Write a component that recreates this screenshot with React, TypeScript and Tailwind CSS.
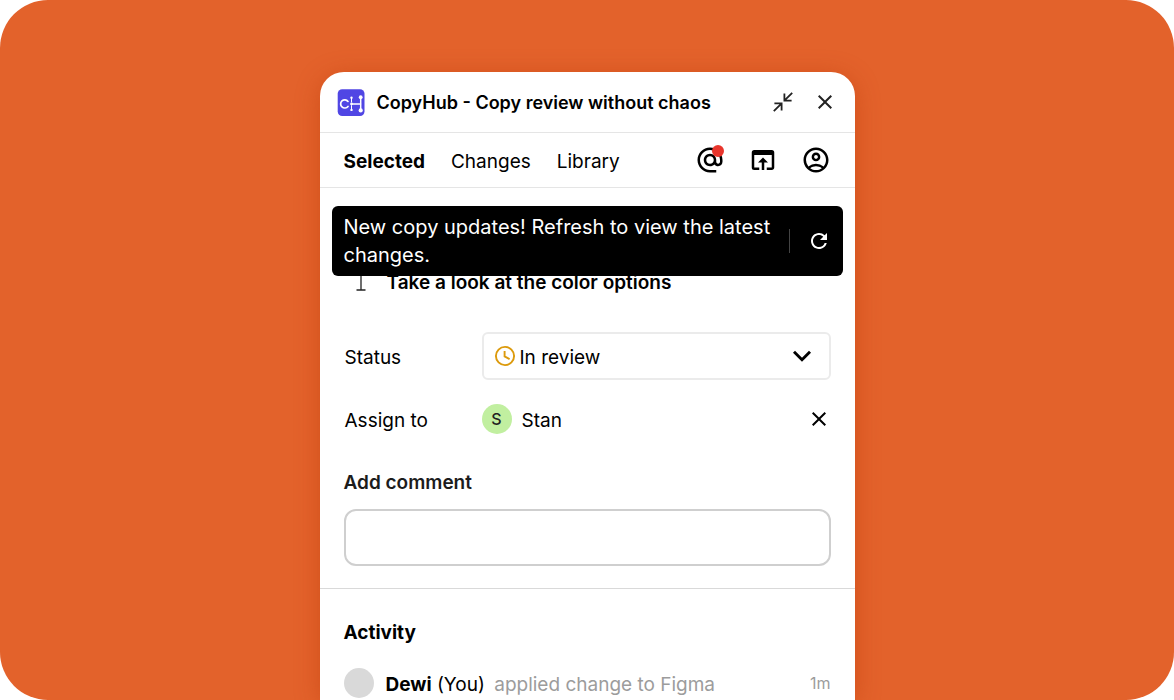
import React, { useState } from "react";
import {
  MdAlternateEmail,
  MdClose,
  MdOpenInBrowser,
  MdOutlineAccountCircle,
  MdRefresh,
} from "react-icons/md";

const tabs = ["Selected", "Changes", "Library"];

const Logo = () => (
  <svg className="size-7 shrink-0" viewBox="0 0 28 28" fill="none" aria-hidden="true">
    <rect x="0.7" y="0.2" width="26.8" height="26.8" rx="4.5" fill="#5046e4" />
    <g stroke="#fff" strokeLinecap="round">
      <path d="M11 12.4a4.1 4.1 0 1 0 0 5" strokeWidth="1.7" />
      <path d="M14.5 9v4M14.5 16.6v4" strokeWidth="1" />
      <path d="M14.5 14.9h9" strokeWidth="1.5" />
      <path d="M23.7 8.5v12.5" strokeWidth="1.5" />
    </g>
    <g fill="#fff">
      <circle cx="14.5" cy="8.8" r="1.2" />
      <circle cx="14.5" cy="14.9" r="1.3" />
      <circle cx="14.5" cy="20.9" r="1.2" />
      <circle cx="23.7" cy="8.2" r="1.9" />
      <circle cx="23.7" cy="21.4" r="2.1" />
    </g>
  </svg>
);

const CollapseIcon = () => (
  <svg className="size-5" viewBox="0 0 20 20" fill="none" stroke="currentColor" strokeWidth="1.8" aria-hidden="true">
    <path d="M19.2 0.8l-7.6 7.6M11.4 1.6v7h7.2" />
    <path d="M0.8 19.2l7.6-7.6M8.6 18.6v-7.2h-7.2" />
  </svg>
);

const ClockIcon = () => (
  <svg className="size-6 shrink-0" viewBox="0 0 24 24" fill="none" stroke="#dc9a0c" strokeWidth="1.9" aria-hidden="true">
    <circle cx="12" cy="12" r="9.1" />
    <path d="M11.6 7v5.4l5 2.8" />
  </svg>
);

const ChevronIcon = () => (
  <svg className="pointer-events-none size-5 shrink-0" viewBox="0 0 20 20" fill="none" stroke="#000" strokeWidth="2.9" aria-hidden="true">
    <path d="M2 5.8l8 8 8-8" />
  </svg>
);

const TextLayerIcon = () => (
  <svg className="h-6 w-5 shrink-0" viewBox="0 0 20 24" fill="none" stroke="#222" strokeWidth="1.3" aria-hidden="true">
    <path d="M5.5 2.5h9M10 2.5v17.5M5.5 20h9" />
  </svg>
);

const App: React.FC = () => {
  const [activeTab, setActiveTab] = useState<string>("Selected");
  const [status, setStatus] = useState<string>("In review");
  const [comment, setComment] = useState<string>("");

  return (
    <div className="h-screen overflow-hidden rounded-[48px] bg-[#e3622b] px-4 pt-18 font-['Inter',sans-serif] text-[19px] leading-7 text-black">
      <main className="mx-auto min-h-full max-w-[535px] rounded-t-3xl bg-white shadow-[0_4px_24px_rgba(180,50,0,0.4)]">
        {/* Title bar */}
        <header className="flex h-[61px] items-center border-b border-[#e5e5e5] pr-[18px] pl-[17px]">
          <div className="flex flex-1 items-center gap-3 pt-0.5">
            <Logo />
            <h1 className="text-lg leading-7 font-semibold">
              CopyHub - Copy review without chaos
            </h1>
          </div>
          <button aria-label="Collapse" className="mr-5 text-[#222]">
            <CollapseIcon />
          </button>
          <button aria-label="Close" className="text-[#222]">
            <MdClose size={24} />
          </button>
        </header>

        {/* Tabs */}
        <nav className="flex h-[55px] items-center border-b border-[#e5e5e5] px-6">
          <div className="flex flex-1 gap-[26px] pt-1">
            {tabs.map((tab) => (
              <button
                key={tab}
                onClick={() => setActiveTab(tab)}
                className={activeTab === tab ? "font-bold" : ""}
              >
                {tab}
              </button>
            ))}
          </div>
          <div className="flex items-center gap-[23px]">
            <button aria-label="Mentions" className="relative">
              <MdAlternateEmail size={30} />
              <span className="absolute top-0 right-px size-3 rounded-full bg-[#e8352c]"></span>
            </button>
            <button aria-label="Open in browser">
              <MdOpenInBrowser size={30} />
            </button>
            <button aria-label="Account">
              <MdOutlineAccountCircle size={30} />
            </button>
          </div>
        </nav>

        {/* Selected layer */}
        <section className="relative px-6 pt-20">
          <div
            role="status"
            className="absolute inset-x-3 top-[18px] flex items-center rounded-md bg-black px-3 py-[7px] text-white"
          >
            <p className="flex-1 text-xl leading-7">
              New copy updates! Refresh to view the latest changes.
            </p>
            <span className="mr-[17px] h-6 w-px bg-[#444]"></span>
            <button aria-label="Refresh">
              <MdRefresh size={24} />
            </button>
          </div>

          <div className="flex h-7 items-center pl-[7px]">
            <TextLayerIcon />
            <h2 className="ml-4 pt-0.5 font-semibold">Take a look at the color options</h2>
          </div>

          <div className="mt-9 flex items-center">
            <label htmlFor="status" className="w-[138px] pt-1 pl-px">
              Status
            </label>
            <div className="flex h-12 flex-1 items-center rounded-md border-2 border-[#ebebeb] pr-[17px] pl-[9px]">
              <ClockIcon />
              <select
                id="status"
                value={status}
                onChange={(e) => setStatus(e.target.value)}
                className="ml-[3px] flex-1 appearance-none bg-transparent pt-1 outline-none"
              >
                <option>In review</option>
                <option>Approved</option>
                <option>Draft</option>
              </select>
              <ChevronIcon />
            </div>
          </div>

          <div className="mt-6 flex h-[30px] items-center">
            <span className="w-[138px] pt-1 pl-px">Assign to</span>
            <span className="flex size-[30px] items-center justify-center rounded-full bg-[#c1efa0] text-base font-medium text-[#222]">
              S
            </span>
            <span className="ml-[10px] flex-1 pt-1">Stan</span>
            <button aria-label="Remove assignee">
              <MdClose size={24} />
            </button>
          </div>

          <label htmlFor="comment" className="mt-[35px] block font-semibold text-[#1c1c1c]">
            Add comment
          </label>
          <input
            id="comment"
            type="text"
            value={comment}
            onChange={(e) => setComment(e.target.value)}
            className="mt-3 h-[57px] w-full rounded-xl border-2 border-[#cfcfcf] px-4 outline-none"
          />
        </section>

        {/* Activity */}
        <section className="mt-[22px] border-t border-[#d9d9d9] px-6 pt-[30px]">
          <h2 className="font-bold">Activity</h2>
          <div className="mt-5 flex items-center">
            <span className="size-[30px] rounded-full bg-[#d9d9d9]"></span>
            <p className="ml-3 flex-1 pt-1">
              <span className="font-bold">Dewi</span> (You){" "}
              <span className="ml-1 text-[#9c9c9c]">applied change to Figma</span>
            </p>
            <time className="text-base text-[#9c9c9c]">1m</time>
          </div>
        </section>
      </main>
    </div>
  );
};

export default App;
